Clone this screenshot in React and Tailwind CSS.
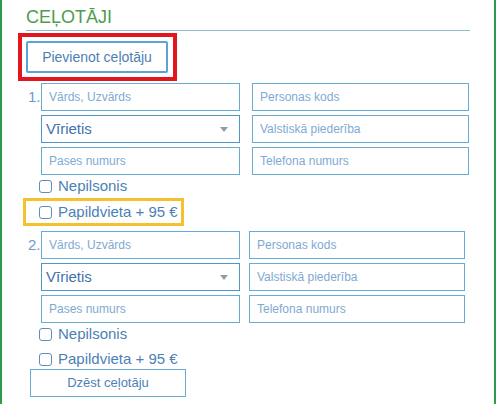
import React from "react";

const inputCls =
  "h-[28px] border border-[#66acd3] bg-white pl-[7px] text-[12px] text-[#3f72ad] placeholder:text-[#7fa9d3] outline-none w-full";

function Checkbox({ label }) {
  return (
    <label className="flex items-center gap-[6px] h-[18px]">
      <span className="w-[13px] h-[13px] border border-[#5f8dc1] rounded-[3px] bg-white shrink-0" />
      <span className="text-[15px] leading-[18px] text-[#4d7fb5]">{label}</span>
    </label>
  );
}

function Select() {
  return (
    <div className="h-[28px] border border-[#4f97c6] bg-white pl-[4px] pr-[11px] flex items-center justify-between">
      <span className="text-[15px] text-[#3f72ad]">Vīrietis</span>
      <svg width="8" height="5" viewBox="0 0 8 5">
        <polygon points="0,0 8,0 4,5" fill="#8f9dab" />
      </svg>
    </div>
  );
}

function Traveller({ n, gap, col2, highlight, last }) {
  return (
    <div className="flex flex-col">
      <div className="flex">
        <div className="w-[15px] h-[28px] flex items-center pl-[2px] text-[15px] text-[#6b9bcd]">
          {n}.
        </div>
        <div
          className="grid gap-y-[4px]"
          style={{ gridTemplateColumns: `199px ${col2}px`, columnGap: `${gap}px` }}
        >
          <input className={inputCls} placeholder="Vārds, Uzvārds" />
          <input className={inputCls} placeholder="Personas kods" />
          <Select />
          <input className={inputCls} placeholder="Valstiskā piederība" />
          <input className={inputCls} placeholder="Pases numurs" />
          <input className={inputCls} placeholder="Telefona numurs" />
        </div>
      </div>
      <div className="mt-[2px] ml-[13px]">
        <Checkbox label="Nepilsonis" />
      </div>
      {highlight ? (
        <div className="mt-[3px] ml-[-3px] w-[161px] h-[28px] border-[3px] border-[#f6c12f] flex items-center pl-[13px]">
          <Checkbox label="Papildvieta + 95 €" />
        </div>
      ) : (
        <div className="mt-[7px] ml-[13px]">
          <Checkbox label="Papildvieta + 95 €" />
        </div>
      )}
      {last && (
        <button className="mt-[1px] ml-[4px] w-[156px] h-[28px] border border-[#66acd3] bg-white text-[13px] text-[#4d7fb5]">
          Dzēst ceļotāju
        </button>
      )}
    </div>
  );
}

export default function App() {
  return (
    <div className="w-[496px] h-[404px] overflow-hidden bg-white border-x-2 border-[#2f9a49] font-['Liberation_Sans',Arial,sans-serif]">
      <div className="pl-[24px] pr-[24px]">
        <h2 className="pt-[7px] pb-[3px] text-[18px] leading-[20px] text-[#4e9c4e] border-b border-[#8dbccd]">
          CEĻOTĀJI
        </h2>
        <div className="mt-[2px] ml-[-8px] w-[159px] h-[48px] border-[4px] border-[#e3151f] p-[4px]">
          <button className="w-[142px] h-[32px] border-2 border-[#5ba3d9] rounded-[2px] bg-white text-[14px] text-[#4d7fb5]">
            Pievienot ceļotāju
          </button>
        </div>
        <div className="mt-[2px]">
          <Traveller n={1} gap={12} col2={217} highlight />
        </div>
        <div className="mt-[5px]">
          <Traveller n={2} gap={9} col2={216} last />
        </div>
      </div>
    </div>
  );
}
